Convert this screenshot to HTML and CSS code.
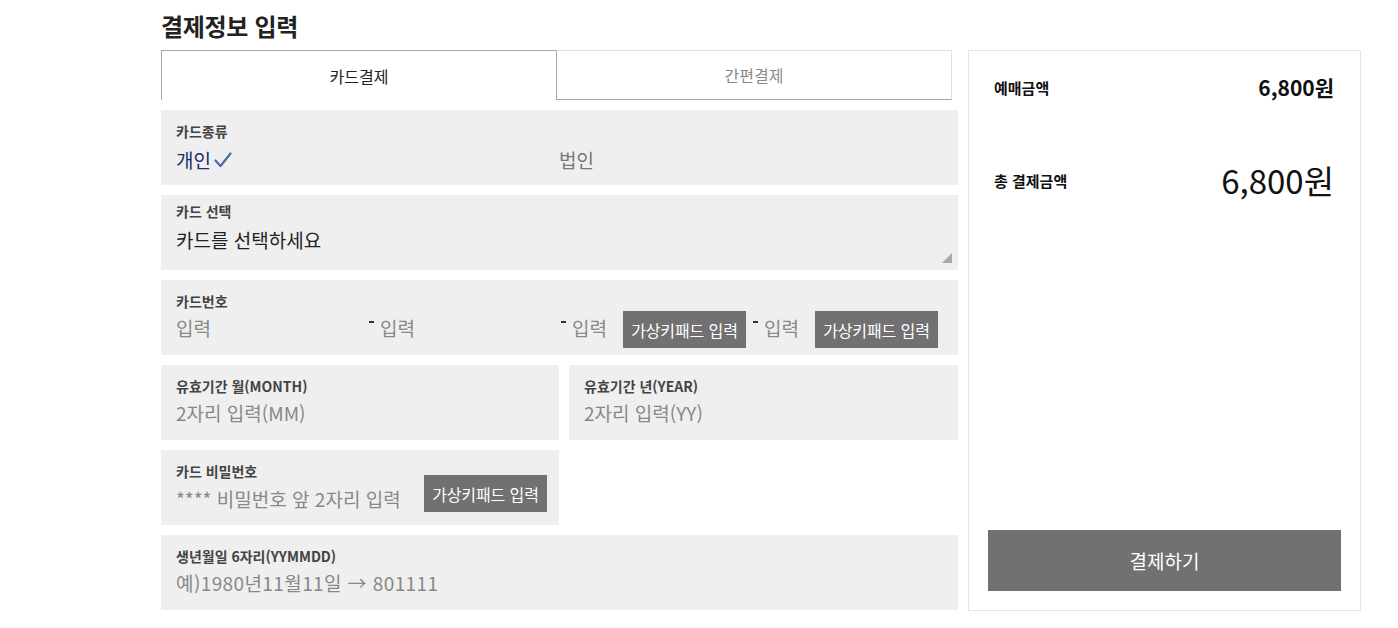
FILE: index.html
```html
<!DOCTYPE html>
<html lang="ko">
<head>
<meta charset="utf-8">
<title>결제정보 입력</title>
<link rel="stylesheet" href="styles.css">
</head>
<body>
<div class="page">
  <h2 class="title">결제정보 입력</h2>
  <div class="main">
    <div class="form-col">
      <div class="tabs">
        <div class="tab tab-active">카드결제</div>
        <div class="tab tab-idle">간편결제</div>
      </div>

      <div class="box">
        <div class="label">카드종류</div>
        <div class="row">
          <span class="opt opt-on">개인<svg class="check" width="18" height="16" viewBox="0 0 18 16"><path d="M1.5 8.5 L6.5 14 L16.5 1.5" fill="none" stroke="#4a68b0" stroke-width="2.2" stroke-linecap="round" stroke-linejoin="round"/></svg></span>
          <span class="opt opt-off">법인</span>
        </div>
      </div>

      <div class="box box-select">
        <div class="label">카드 선택</div>
        <div class="row"><span class="select-text">카드를 선택하세요</span></div>
      </div>

      <div class="box">
        <div class="label">카드번호</div>
        <div class="row">
          <input class="inp w193" placeholder="입력">
          <span class="dash"></span>
          <input class="inp w181" placeholder="입력">
          <span class="dash"></span>
          <input class="inp w51" placeholder="입력">
          <button class="keypad">가상키패드 입력</button>
          <span class="dash dash-gap"></span>
          <input class="inp w51" placeholder="입력">
          <button class="keypad">가상키패드 입력</button>
        </div>
      </div>

      <div class="split">
        <div class="box">
          <div class="label">유효기간 월(MONTH)</div>
          <div class="row"><input class="inp wfull" placeholder="2자리 입력(MM)"></div>
        </div>
        <div class="box">
          <div class="label">유효기간 년(YEAR)</div>
          <div class="row"><input class="inp wfull" placeholder="2자리 입력(YY)"></div>
        </div>
      </div>

      <div class="split">
        <div class="box">
          <div class="label">카드 비밀번호</div>
          <div class="row row-top">
            <input class="inp w248" placeholder="**** 비밀번호 앞 2자리 입력">
            <button class="keypad keypad-up">가상키패드 입력</button>
          </div>
        </div>
      </div>

      <div class="box">
        <div class="label">생년월일 6자리(YYMMDD)</div>
        <div class="row"><input class="inp wfull inp-wide" placeholder="예)1980년11월11일 → 801111"></div>
      </div>
    </div>

    <aside class="summary">
      <div class="sum-row sum-row1">
        <span class="sum-label">예매금액</span>
        <span class="sum-value">6,800원</span>
      </div>
      <div class="sum-row sum-row2">
        <span class="sum-label">총 결제금액</span>
        <span class="sum-total">6,800원</span>
      </div>
      <button class="pay">결제하기</button>
    </aside>
  </div>
</div>
</body>
</html>
```

FILE: styles.css
```css
* { box-sizing: border-box; }
html, body {
  margin: 0;
  padding: 0;
  background: #fff;
  font-family: "Noto Sans CJK KR", "Noto Sans", sans-serif;
  color: #222;
}
.page {
  padding: 11px 0 0 161px;
  width: 1361px;
}
.title {
  margin: 0 0 9px;
  font-size: 24px;
  line-height: 30px;
  font-weight: 700;
  color: #222;
  letter-spacing: -0.3px;
}
.main {
  display: flex;
  gap: 10px;
  align-items: flex-start;
}
.form-col {
  width: 797px;
  display: flex;
  flex-direction: column;
  gap: 10px;
}
.tabs {
  display: flex;
  height: 50px;
}
.tab {
  height: 50px;
  display: flex;
  align-items: center;
  justify-content: center;
  font-size: 16px;
}
.tab-active {
  width: 396px;
  border: 1px solid #a3a7b0;
  border-bottom: none;
  color: #222;
}
.tab-idle {
  width: 395px;
  border-top: 1px solid #e0e0e0;
  border-right: 1px solid #e0e0e0;
  border-bottom: 1px solid #a3a7b0;
  color: #8a8a8a;
}
.box {
  position: relative;
  height: 75px;
  background: #efefef;
  padding: 11px 15px 0;
}
.label {
  font-size: 14px;
  line-height: 20px;
  font-weight: 700;
  color: #444;
}
.row {
  display: flex;
  align-items: center;
  height: 37px;
}
.row-top { align-items: flex-start; }
.opt {
  font-size: 19px;
  line-height: 26px;
  display: flex;
  align-items: center;
}
.opt-on {
  width: 383px;
  color: #1d2d6b;
}
.check {
  margin-left: 3px;
  margin-top: 1px;
}
.opt-off { color: #777; }
.select-text {
  font-size: 19px;
  color: #222;
}
.box-select { padding-top: 6px; }
.box-select::after {
  content: "";
  position: absolute;
  right: 6px;
  bottom: 7px;
  width: 0;
  height: 0;
  border-left: 10px solid transparent;
  border-bottom: 10px solid #a3a7b0;
}
.inp {
  border: none;
  background: transparent;
  padding: 0;
  margin: 0 0 4px;
  height: 28px;
  font-family: inherit;
  font-size: 19px;
  color: #222;
  outline: none;
}
.inp::placeholder { color: #888; }
.inp-wide { letter-spacing: 0.4px; }
.row-top .inp { margin-top: 3px; margin-bottom: 0; }
.w193 { width: 193px; }
.w181 { width: 181px; }
.w51 { width: 51px; }
.w248 { width: 248px; flex: none; }
.wfull { width: 100%; }
.dash {
  flex: none;
  width: 11px;
  height: 2px;
  align-self: flex-start;
  margin-top: 10px;
  border-left: 5px solid #333;
}
.dash-gap { margin-left: 7px; }
.keypad {
  flex: none;
  width: 123px;
  height: 37px;
  border: none;
  background: #717171;
  color: #fff;
  font-family: inherit;
  font-size: 16px;
  letter-spacing: -0.1px;
  padding: 0;
}
.keypad-up { margin-top: -6px; }
.split {
  display: grid;
  grid-template-columns: 398px 1fr;
  gap: 10px;
}
.summary {
  width: 393px;
  height: 561px;
  border: 1px solid #e3e3e3;
  display: flex;
  flex-direction: column;
  padding: 18px 26px 19px 25px;
}
.sum-row {
  display: flex;
  justify-content: space-between;
  align-items: center;
}
.sum-row1 { height: 36px; }
.sum-row2 { height: 50px; margin-top: 50px; }
.sum-label {
  font-size: 15px;
  font-weight: 700;
  color: #111;
}
.sum-value {
  font-size: 21px;
  font-weight: 700;
  color: #111;
}
.sum-total {
  font-size: 33px;
  font-weight: 400;
  color: #111;
}
.pay {
  margin: auto -7px 0 -6px;
  height: 61px;
  border: none;
  background: #717171;
  color: #fff;
  font-family: inherit;
  font-size: 19px;
}
```
